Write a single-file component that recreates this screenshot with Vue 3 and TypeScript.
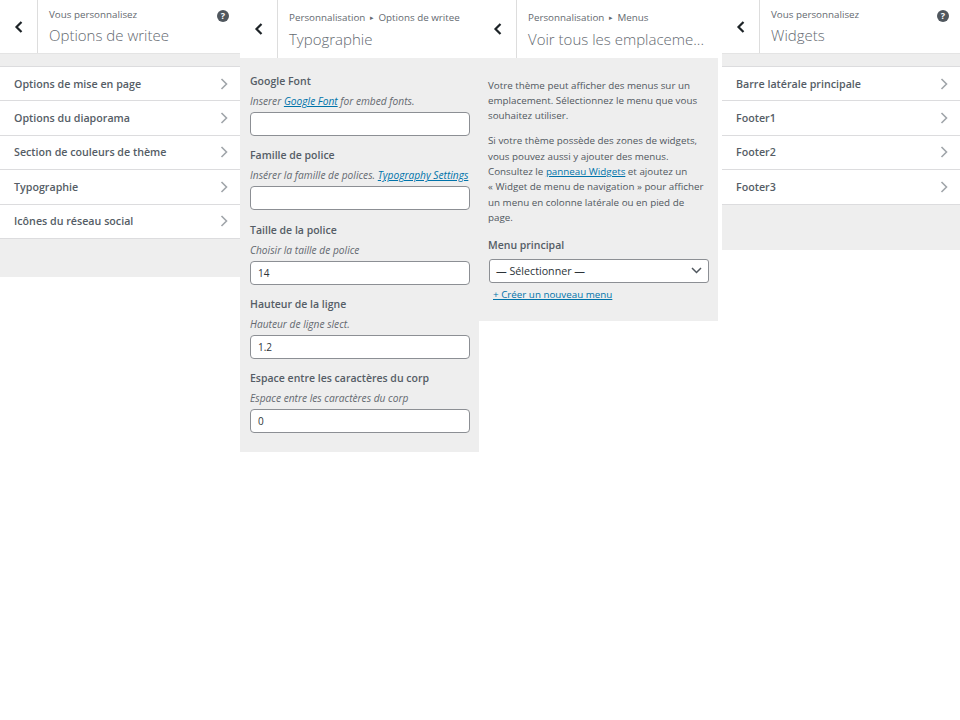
<script setup lang="ts">
const Back = 'M12.5 5 7.500 10l5 5'
const firstRows: string[] = ['Options de mise en page', 'Options du diaporama', 'Section de couleurs de thème', 'Typographie', 'Icônes du réseau social']
const widgetRows: string[] = ['Barre latérale principale', 'Footer1', 'Footer2', 'Footer3']
const fields = [
  { label: 'Taille de la police', hint: 'Choisir la taille de police', value: '14' },
  { label: 'Hauteur de la ligne', hint: 'Hauteur de ligne slect.', value: '1.2' },
  { label: 'Espace entre les caractères du corp', hint: 'Espace entre les caractères du corp', value: '0' },
]
</script>

<template>
  <div class="page">
    <section class="panel p1">
      <header class="head short">
        <button class="back"><svg width="20" height="20" viewBox="0 0 20 20"><path :d="Back" class="backpath" /></svg></button>
        <div class="title">
          <div class="crumb">Vous personnalisez</div>
          <div class="big">Options de writee</div>
        </div>
        <span class="help">?</span>
      </header>
      <div class="gap"></div>
      <ul class="rows">
        <li v-for="r in firstRows" :key="r"><span>{{ r }}</span><svg width="10" height="12" viewBox="0 0 10 12"><path d="M2.500 1 7.500 6l-5 5" class="chev" /></svg></li>
      </ul>
      <div class="tail t1"></div>
    </section>

    <section class="panel p2">
      <header class="head tall">
        <button class="back"><svg width="20" height="20" viewBox="0 0 20 20"><path :d="Back" class="backpath" /></svg></button>
        <div class="title">
          <div class="crumb">Personnalisation <span class="tri">▸</span> Options de writee</div>
          <div class="big">Typographie</div>
        </div>
      </header>
      <div class="body form">
        <div class="field">
          <div class="label">Google Font</div>
          <div class="hint">Inserer <a>Google Font</a> for embed fonts.</div>
          <div class="input"></div>
        </div>
        <div class="field">
          <div class="label">Famille de police</div>
          <div class="hint">Insérer la famille de polices. <a>Typography Settings</a></div>
          <div class="input"></div>
        </div>
        <div v-for="f in fields" :key="f.label" class="field">
          <div class="label">{{ f.label }}</div>
          <div class="hint">{{ f.hint }}</div>
          <div class="input">{{ f.value }}</div>
        </div>
      </div>
    </section>

    <section class="panel p3">
      <header class="head tall">
        <button class="back"><svg width="20" height="20" viewBox="0 0 20 20"><path :d="Back" class="backpath" /></svg></button>
        <div class="title">
          <div class="crumb">Personnalisation <span class="tri">▸</span> Menus</div>
          <div class="big clip">Voir tous les emplaceme...</div>
        </div>
      </header>
      <div class="body menus">
        <p>Votre thème peut afficher des menus sur un emplacement. Sélectionnez le menu que vous souhaitez utiliser.</p>
        <p>Si votre thème possède des zones de widgets, vous pouvez aussi y ajouter des menus. Consultez le <a>panneau Widgets</a> et ajoutez un «&nbsp;Widget de menu de navigation&nbsp;» pour afficher un menu en colonne latérale ou en pied de page.</p>
        <div class="label mp">Menu principal</div>
        <div class="select">
          <span>— Sélectionner —</span>
          <svg width="11" height="7" viewBox="0 0 11 7"><path d="M1 1l4.500 4.500L10 1" class="caret" /></svg>
        </div>
        <a class="create">+ Créer un nouveau menu</a>
      </div>
    </section>

    <section class="panel p4">
      <header class="head short">
        <button class="back"><svg width="20" height="20" viewBox="0 0 20 20"><path :d="Back" class="backpath" /></svg></button>
        <div class="title">
          <div class="crumb">Vous personnalisez</div>
          <div class="big">Widgets</div>
        </div>
        <span class="help">?</span>
      </header>
      <div class="gap"></div>
      <ul class="rows">
        <li v-for="r in widgetRows" :key="r"><span>{{ r }}</span><svg width="10" height="12" viewBox="0 0 10 12"><path d="M2.500 1 7.500 6l-5 5" class="chev" /></svg></li>
      </ul>
      <div class="tail t4"></div>
    </section>
  </div>
</template>

<style>
html, body { margin: 0; background: #fff; }
</style>

<style scoped>
.page {
  display: flex;
  width: 960px;
  height: 720px;
  font-family: "Open Sans", "Noto Sans", sans-serif;
  color: #50575e;
  overflow: hidden;
}
.panel { flex: none; }
.p1 { width: 240px; }
.p2 { width: 239px; }
.p3 { width: 239px; }
.p4 { width: 238px; margin-left: 4px; }
.head { display: flex; background: #fff; position: relative; box-sizing: border-box; }
.short { height: 54px; border-bottom: 1px solid #e4e4e4; }
.tall { height: 58px; }
.back {
  width: 38px;
  flex: none;
  padding: 0;
  border: 0;
  border-right: 1px solid #ddd;
  background: #fff;
  display: flex;
  align-items: center;
  justify-content: center;
}
.backpath { fill: none; stroke: #1d2327; stroke-width: 2.2; }
.title { padding-left: 11px; min-width: 0; }
.short .title { padding-top: 7px; }
.tall .title { padding-top: 10px; }
.crumb { font-size: 9.800px; line-height: 15px; color: #646970; white-space: nowrap; }
.tri { font-size: 7px; margin: 0 2px; position: relative; top: -1px; }
.big { font-size: 15px; line-height: 20px; color: #646970; margin-top: 3px; font-weight: 300; white-space: nowrap; }
.help {
  position: absolute;
  right: 11px;
  top: 10px;
  width: 12px;
  height: 12px;
  border-radius: 50%;
  background: #50575e;
  color: #fff;
  font-size: 9px;
  font-weight: 700;
  line-height: 12px;
  text-align: center;
}
.gap { height: 12px; background: #eee; }
.rows { list-style: none; margin: 0; padding: 0; border-top: 1px solid #dcdcde; }
.rows li {
  height: 34.4px;
  box-sizing: border-box;
  border-bottom: 1px solid #dcdcde;
  background: #fff;
  padding: 0 11px 0 14px;
  display: flex;
  align-items: center;
  justify-content: space-between;
  font-size: 10.700px;
  font-weight: 600;
  color: #555d66;
}
.rows li svg { flex: none; }
.chev { fill: none; stroke: #a0a5aa; stroke-width: 1.6; }
.tail { background: #eee; }
.t1 { height: 38.500px; }
.t4 { height: 45.600px; }
.body { background: #eee; box-sizing: border-box; }
.form { height: 394px; padding: 16px 9px 0 10px; }
.field { height: 74.300px; }
.label { font-size: 10.500px; line-height: 15px; font-weight: 600; color: #555d66; }
.hint { font-size: 10.200px; line-height: 14px; font-style: italic; color: #646970; margin-top: 5px; white-space: nowrap; }
a { color: #0073aa; text-decoration: underline; }
.input {
  box-sizing: border-box;
  height: 24px;
  margin-top: 4px;
  background: #fff;
  border: 1px solid #8c8f94;
  border-radius: 4px;
  padding: 0 7px;
  font-size: 10px;
  line-height: 22px;
  color: #2c3338;
}
.menus { height: 263px; padding: 19.500px 10px 0 9px; }
.menus p { margin: 0 0 10px; font-size: 9.800px; line-height: 15.300px; color: #50575e; }
.mp { margin-top: 12.500px; }
.select {
  box-sizing: border-box;
  height: 24px;
  margin: 6px 0 0 1px;
  width: 220px;
  background: #fff;
  border: 1px solid #8c8f94;
  border-radius: 3px;
  padding: 0 6px 0 6px;
  display: flex;
  align-items: center;
  justify-content: space-between;
  font-size: 10.700px;
  color: #2c3338;
}
.caret { fill: none; stroke: #50575e; stroke-width: 1.5; }
.create { display: block; margin: 4px 0 0 5px; font-size: 9.800px; line-height: 15px; }
</style>
